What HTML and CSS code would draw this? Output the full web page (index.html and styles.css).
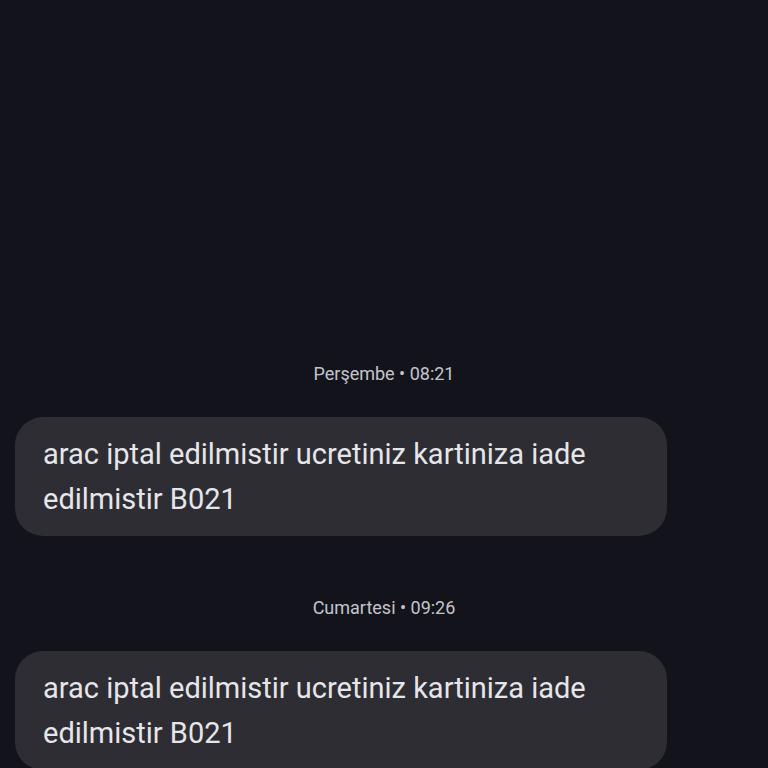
FILE: index.html
```html
<!DOCTYPE html>
<html lang="tr">
<head>
    <meta charset="UTF-8">
    <meta name="viewport" content="width=device-width, initial-scale=1.0">
    <title>Mesajlar</title>
    <link rel="stylesheet" href="styles.css">
</head>
<body>
    <!-- Sohbet akisi -->
    <main class="thread">
        <div class="msg-time">Perşembe • 08:21</div>
        <div class="bubble">arac iptal edilmistir ucretiniz kartiniza iade edilmistir B021</div>

        <div class="msg-time">Cumartesi • 09:26</div>
        <div class="bubble">arac iptal edilmistir ucretiniz kartiniza iade edilmistir B021</div>
    </main>
</body>
</html>
```

FILE: styles.css
```css
body {
    margin: 0;
    background: #13141b;
    color: #e6e6ea;
    font-family: Roboto, "Noto Sans", sans-serif;
    height: 768px;
    overflow: hidden;
}

.thread {
    display: flex;
    flex-direction: column;
    padding: 362px 0 0 15px;
}

.msg-time {
    width: 738px;
    text-align: center;
    font-size: 18px;
    line-height: 24px;
    color: #c4c4cc;
    margin-bottom: 31px;
}

.bubble {
    width: 596px;
    background: #2d2d33;
    border-radius: 28px;
    padding: 15px 28px 14px;
    font-size: 29px;
    line-height: 45px;
    margin-bottom: 60px;
}
```
